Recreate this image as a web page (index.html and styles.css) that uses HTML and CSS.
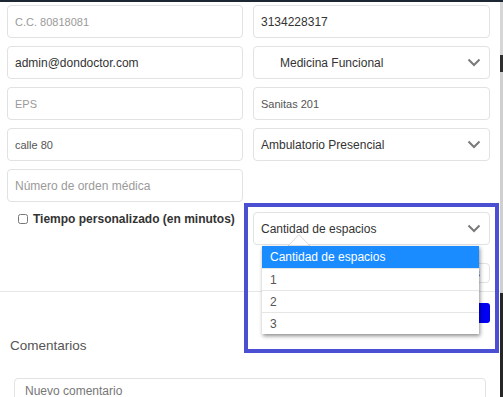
FILE: index.html
```html
<!DOCTYPE html>
<html lang="es">
<head>
  <meta charset="UTF-8">
  <meta name="viewport" content="width=device-width, initial-scale=1.0">
  <title>Nueva cita</title>
  <link rel="stylesheet" href="styles.css">
</head>
<body>
  <div class="screen">
    <div class="modal">
      <form class="form-grid">
        <input class="field tiny" placeholder="C.C. 80818081">
        <input class="field" value="3134228317">
        <input class="field" value="admin@dondoctor.com">
        <div class="field select indent">
          <span>Medicina Funcional</span>
          <svg class="chevron" width="14" height="9" viewBox="0 0 14 9"><path d="M1.5 1.5 7 7l5.5-5.5" fill="none" stroke="#7a7a7a" stroke-width="2"/></svg>
        </div>
        <input class="field small" placeholder="EPS">
        <input class="field small soft" value="Sanitas 201">
        <input class="field small soft" value="calle 80">
        <div class="field select">
          <span>Ambulatorio Presencial</span>
          <svg class="chevron" width="14" height="9" viewBox="0 0 14 9"><path d="M1.5 1.5 7 7l5.5-5.5" fill="none" stroke="#7a7a7a" stroke-width="2"/></svg>
        </div>
        <input class="field" placeholder="Número de orden médica">
        <div></div>

        <label class="check"><input type="checkbox"> Tiempo personalizado (en minutos)</label>
        <div class="field select spaced">
          <span>Cantidad de espacios</span>
          <svg class="chevron" width="14" height="9" viewBox="0 0 14 9"><path d="M1.5 1.5 7 7l5.5-5.5" fill="none" stroke="#7a7a7a" stroke-width="2"/></svg>
        </div>
        <div></div>
        <input class="field mini" value="30 minutos">
      </form>

      <hr class="divider">

      <div class="actions">
        <button type="button" class="btn">Guardar</button>
      </div>

      <h3 class="comments-title">Comentarios</h3>
      <textarea class="comment" placeholder="Nuevo comentario"></textarea>
    </div>
    <div class="scrollbar"></div>

    <!-- marco de resaltado + lista abierta del select -->
    <div class="highlight"></div>
    <svg class="caret" width="24" height="13" viewBox="0 0 24 13"><polygon points="1,13 12,1.5 23,13" fill="#fff" stroke="#d9d9d9"/></svg>
    <ul class="dropdown">
      <li class="opt active">Cantidad de espacios</li>
      <li class="opt">1</li>
      <li class="opt">2</li>
      <li class="opt">3</li>
    </ul>
  </div>
</body>
</html>
```

FILE: styles.css
```css
body {
  margin: 0;
  font-family: "Liberation Sans", Arial, sans-serif;
  background: #fff;
}
.screen {
  position: relative;
  display: flex;
  width: 503px;
  height: 397px;
  overflow: hidden;
  border-top: 2px solid #1c2733;
  box-sizing: border-box;
}
.modal {
  width: 500px;
  background: white;
}
.scrollbar {
  width: 3px;
  background: linear-gradient(#d6d6d6 0, #d6d6d6 53px, #2e2e2e 53px, #2e2e2e 70px, #cfcfcf 70px, #cfcfcf 291px, #262626 291px);
}
.form-grid {
  display: grid;
  grid-template-columns: 236px 237px;
  grid-template-rows: repeat(5, 33px);
  column-gap: 10px;
  row-gap: 8px;
  padding: 3px 0 0 7px;
  margin: 0;
}
.field {
  box-sizing: border-box;
  height: 33px;
  border: 1px solid #e2e2e2;
  border-radius: 4px;
  padding: 0 7px;
  font-family: inherit;
  font-size: 12px;
  color: #333;
  background: white;
  outline: none;
}
.field::placeholder {
  color: #9a9a9a;
}
.tiny {
  font-size: 11px;
}
.small {
  font-size: 11px;
}
.soft {
  color: #555;
}
.select {
  display: flex;
  align-items: center;
  justify-content: space-between;
  padding-right: 8px;
}
.indent {
  padding-left: 26px;
}
.spaced {
  margin-top: 2px;
}
.check {
  display: flex;
  align-items: center;
  margin-top: 2px;
  padding-left: 11px;
  height: 14px;
  font-size: 12px;
  font-weight: bold;
  color: #333;
}
.check input {
  width: 10px;
  height: 10px;
  margin: 0 5px 0 0;
}
.mini {
  justify-self: end;
  width: 150px;
  height: 20px;
  margin-top: 10px;
  font-size: 11px;
  text-align: right;
  padding-right: 9px;
  color: #555;
}
.divider {
  margin: 8px 0 0;
  border: 0;
  border-top: 1px solid #e6e6e6;
}
.actions {
  display: flex;
  justify-content: flex-end;
  padding-right: 10px;
  margin-top: 11px;
}
.btn {
  width: 90px;
  height: 20px;
  border: 0;
  border-radius: 3px;
  background: #0000f2;
  color: white;
  font-family: inherit;
  font-size: 12px;
}
.comments-title {
  margin: 15px 0 0 10px;
  font-size: 13.5px;
  line-height: 16px;
  font-weight: normal;
  color: #555;
}
.comment {
  display: block;
  box-sizing: border-box;
  width: 472px;
  height: 60px;
  margin: 24px 0 0 14px;
  padding: 5px 10px;
  border: 1px solid #e2e2e2;
  border-radius: 4px;
  font-family: inherit;
  font-size: 12px;
  resize: none;
}
.comment::placeholder {
  color: #777;
}

/* resaltado y desplegable por encima del formulario */
.highlight {
  position: absolute;
  left: 244px;
  top: 201px;
  width: 255px;
  height: 150px;
  box-sizing: border-box;
  border: 4px solid #4b4fd1;
}
.caret {
  position: absolute;
  left: 287px;
  top: 231px;
}
.dropdown {
  position: absolute;
  left: 262px;
  top: 244px;
  width: 217px;
  margin: 0;
  padding: 0;
  list-style: none;
  background: white;
  box-shadow: 1px 2px 4px rgba(0,0,0,0.45);
}
.opt {
  height: 21px;
  line-height: 22px;
  padding-left: 8px;
  font-size: 12px;
  color: #555;
  border-top: 1px solid #e6e6e6;
}
.opt.active {
  height: 22px;
  border-top: 0;
  background: #1a8cff;
  color: white;
}
```
